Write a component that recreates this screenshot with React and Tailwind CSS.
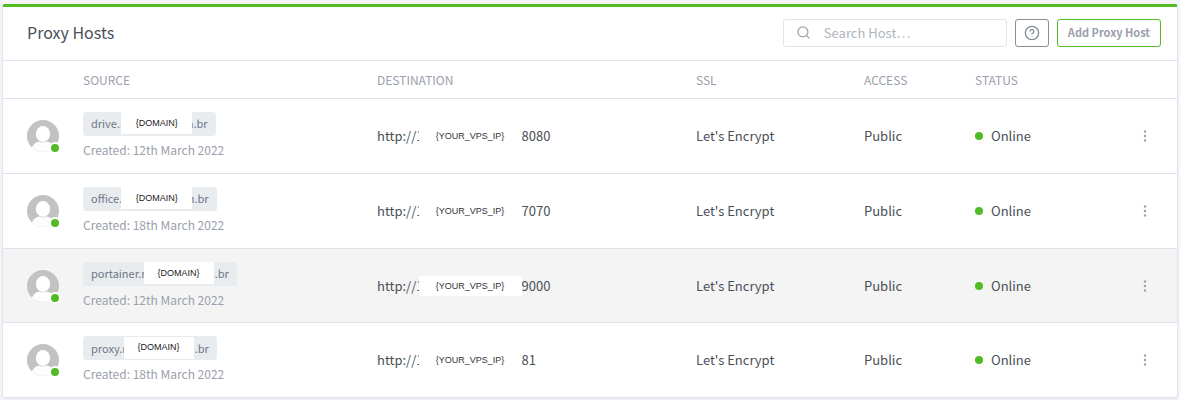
import React from "react";

const hosts = [
  { start: "drive.r", end: "m.br", mask: "w-[71px] -ml-[3px] -mr-[9px]", created: "12th March 2022", port: "8080" },
  { start: "office.", end: "m.br", mask: "w-[71px] -ml-px -mr-2", created: "18th March 2022", port: "7070" },
  { start: "portainer.r", end: "m.br", mask: "w-[70px] -ml-0.5 -mr-[9px]", created: "12th March 2022", port: "9000", active: true },
  { start: "proxy.r", end: "m.br", mask: "w-[70px] -ml-[3px] -mr-[9px]", created: "18th March 2022", port: "81" },
];

function Avatar() {
  return (
    <div className="relative size-8">
      <svg viewBox="0 0 32 32" className="size-8 rounded-full" role="img" aria-label="User avatar">
        <rect width="32" height="32" fill="#c2c2c2" />
        <ellipse cx="16" cy="14" rx="7.2" ry="7.9" fill="#fff" />
        <path d="M3.500 32C4.500 26 7.500 22.800 12 21.500L16 22.500l4-1C24.500 22.800 27.500 26 28.500 32Z" fill="#fdfdfd" />
      </svg>
      <span className="absolute -right-0.5 -bottom-0.5 size-3 rounded-full border-2 border-white bg-[#50bb24]" />
    </div>
  );
}

function HostRow({ host }) {
  return (
    <tr className={host.active ? "border-t border-[#dee2e9] bg-[#f4f4f4]" : "border-t border-[#dee2e9]"}>
      <td className="pl-6">
        <Avatar />
      </td>
      <td className="px-3">
        <div className="flex h-6 w-fit items-center rounded-[3px] bg-[#e9ecef] px-2 pb-px text-[11px] text-[#6e7687]">
          <span>{host.start}</span>
          <span className={`${host.mask} relative flex h-[22px] items-center justify-center bg-white pb-px font-['Liberation_Sans',sans-serif] text-[9px] text-[#222]`}>
            {"{DOMAIN}"}
          </span>
          <span>{host.end}</span>
        </div>
        <div className="mt-1 text-xs leading-5 text-[#9aa0ac]">Created: {host.created}</div>
      </td>
      <td className="px-3">
        <div className="flex items-center">
          <span>http://1</span>
          <span className="relative -ml-[5px] flex h-5 w-[103px] items-center justify-center bg-white font-['Liberation_Sans',sans-serif] text-[9px] text-[#333]">
            {"{YOUR_VPS_IP}"}
          </span>
          <span>{host.port}</span>
        </div>
      </td>
      <td className="px-3">Let's Encrypt</td>
      <td className="px-3">Public</td>
      <td className="px-3">
        <div className="flex items-center gap-2">
          <span className="size-2 rounded-full bg-[#50bb24]" />
          Online
        </div>
      </td>
      <td className="pr-6 text-right">
        <button type="button" aria-label="Host actions" className="inline-flex h-6 w-4 items-center justify-center align-middle text-[#9aa0ac]">
          <svg viewBox="0 0 4 12" className="h-3 w-1" fill="currentColor">
            <circle cx="2" cy="1.500" r="1.200" />
            <circle cx="2" cy="6" r="1.200" />
            <circle cx="2" cy="10.500" r="1.200" />
          </svg>
        </button>
      </td>
    </tr>
  );
}

export default function App() {
  return (
    <div className="min-h-screen bg-[#f3f5fa] px-0.5 pt-1 font-['Noto_Sans_CJK_SC',sans-serif] text-[13px] leading-5 text-[#495057]">
      <main className="overflow-hidden rounded-[3px] border border-t-3 border-[#dfe5ee] border-t-[#50bb24] bg-white shadow-xs">
        <header className="flex h-[53px] items-center gap-2 pr-4 pb-0.5 pl-6">
          <h1 className="mr-auto pb-0.5 text-base leading-6">Proxy Hosts</h1>
          <label className="flex h-7 w-56 items-center rounded-[3px] border border-[#dfe5ee] pl-3 text-[#9aa0ac]">
            <svg viewBox="0 0 24 24" className="size-[15px] shrink-0" fill="none" stroke="currentColor" strokeWidth="2" strokeLinecap="round">
              <circle cx="11" cy="11" r="8" />
              <path d="m21 21-4.350-4.350" />
            </svg>
            <input type="text" aria-label="Search Host" placeholder="Search Host…" className="ml-[13px] w-full min-w-0 bg-transparent outline-none placeholder:text-[#adb5bd]" />
          </label>
          <button type="button" aria-label="Help" className="flex h-7 w-[34px] items-center justify-center rounded-[3px] border border-[#868e96] text-[#868e96]">
            <svg viewBox="0 0 24 24" className="size-4" fill="none" stroke="currentColor" strokeWidth="2" strokeLinecap="round" strokeLinejoin="round">
              <circle cx="12" cy="12" r="10" />
              <path d="M9.090 9a3 3 0 0 1 5.830 1c0 2-3 3-3 3M12 17h.01" />
            </svg>
          </button>
          <button type="button" className="flex h-7 items-center rounded-[3px] border border-[#50bb24] px-2.5 pb-0.5 text-[11px] leading-4 font-bold text-[#9aa0ac]">
            Add Proxy Host
          </button>
        </header>
        <table className="h-[337px] w-full table-fixed border-collapse text-left">
          <thead>
            <tr className="h-[38px] border-t border-[#dfe5ee] text-xs text-[#9aa0ac] uppercase">
              <th className="w-[68px]" aria-label="Owner" />
              <th className="w-[294px] px-3 font-normal">Source</th>
              <th className="w-[319px] px-3 font-normal">Destination</th>
              <th className="w-[168px] px-3 font-normal">SSL</th>
              <th className="w-[111px] px-3 font-normal">Access</th>
              <th className="w-[134px] px-3 font-normal">Status</th>
              <th className="w-[80px]" aria-label="Actions" />
            </tr>
          </thead>
          <tbody>
            {hosts.map((host) => (
              <HostRow key={host.port} host={host} />
            ))}
          </tbody>
        </table>
      </main>
    </div>
  );
}
